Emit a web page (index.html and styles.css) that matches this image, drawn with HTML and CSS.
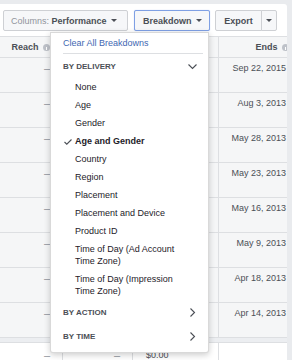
FILE: index.html
```html
<!DOCTYPE HTML>
<html>
    <head>
        <meta http-equiv="Content-Type" content="text/html;charset=UTF-8">
        <title>Ads Manager - Breakdown</title>
        <link rel="stylesheet" href="styles.css">
    </head>
<body>
<div class="card">
    <div class="toolbar">
        <button class="btn cols"><span class="muted">Columns:</span>&nbsp;Performance <i class="caret"></i></button>
        <div class="breakdown">
            <button class="btn focus">Breakdown <i class="caret"></i></button>
            <div class="menu">
                <a class="clear">Clear All Breakdowns</a>
                <div class="sep"></div>
                <div class="section">BY DELIVERY
                    <svg width="9" height="9" viewBox="0 0 9 9"><polyline points="0.5,2.5 4.5,6.5 8.5,2.5" fill="none" stroke="#4b4f56" stroke-width="1.1"/></svg>
                </div>
                <ul class="options">
                    <li>None</li>
                    <li>Age</li>
                    <li>Gender</li>
                    <li class="checked"><svg class="check" width="8" height="6" viewBox="0 0 8 6"><polyline points="0.5,3 2.8,5.2 7.5,0.5" fill="none" stroke="#4b4f56" stroke-width="1.1"/></svg>Age and Gender</li>
                    <li>Country</li>
                    <li>Region</li>
                    <li>Placement</li>
                    <li>Placement and Device</li>
                    <li>Product ID</li>
                    <li>Time of Day (Ad Account<br>Time Zone)</li>
                    <li>Time of Day (Impression<br>Time Zone)</li>
                </ul>
                <div class="section">BY ACTION
                    <svg width="9" height="9" viewBox="0 0 9 9"><polyline points="2.5,0.5 6.5,4.5 2.5,8.5" fill="none" stroke="#4b4f56" stroke-width="1.1"/></svg>
                </div>
                <div class="section">BY TIME
                    <svg width="9" height="9" viewBox="0 0 9 9"><polyline points="2.5,0.5 6.5,4.5 2.5,8.5" fill="none" stroke="#4b4f56" stroke-width="1.1"/></svg>
                </div>
            </div>
        </div>
        <div class="split">
            <button class="btn export">Export</button><button class="btn arrow"><i class="caret"></i></button>
        </div>
    </div>
    <div class="row head">
        <div class="num">Reach <i class="info"></i></div>
        <div></div>
        <div></div>
        <div class="date">Ends <i class="info"></i></div>
    </div>
    <div class="row"><div class="num"><span class="dash">&ndash;</span></div><div></div><div></div><div class="date">Sep 22, 2015</div></div>
    <div class="row"><div class="num"><span class="dash">&ndash;</span></div><div></div><div></div><div class="date">Aug 3, 2013</div></div>
    <div class="row"><div class="num"><span class="dash">&ndash;</span></div><div></div><div></div><div class="date">May 28, 2013</div></div>
    <div class="row"><div class="num"><span class="dash">&ndash;</span></div><div></div><div></div><div class="date">May 23, 2013</div></div>
    <div class="row"><div class="num"><span class="dash">&ndash;</span></div><div></div><div></div><div class="date">May 16, 2013</div></div>
    <div class="row"><div class="num"><span class="dash">&ndash;</span></div><div></div><div></div><div class="date">May 9, 2013</div></div>
    <div class="row"><div class="num"><span class="dash">&ndash;</span></div><div></div><div></div><div class="date">Apr 18, 2013</div></div>
    <div class="row"><div class="num"><span class="dash">&ndash;</span></div><div></div><div></div><div class="date">Apr 14, 2013</div></div>
    <div class="band"></div>
    <div class="row total"><div class="num"><span class="dash">&ndash;</span></div><div class="num"><span class="dash">&ndash;</span></div><div class="spend">$0.00</div><div></div></div>
</div>
</body>
</html>
```

FILE: styles.css
```css
* {
    box-sizing: border-box;
}
body {
    margin: 0;
    height: 360px;
    overflow: hidden;
    background: #e9ebee;
    font: 9px "Liberation Sans", Arial, sans-serif;
    color: #1d2129;
}
.card {
    width: 287px;
    margin-top: 4px;
    height: 400px;
    background: #fff;
    border-top-right-radius: 3px;
}
.toolbar {
    display: flex;
    padding: 6px 0 5px 3px;
}
.btn {
    height: 21px;
    display: flex;
    align-items: center;
    border: 1px solid #ced0d4;
    border-radius: 2px;
    background: #f6f7f9;
    color: #4b4f56;
    font: bold 9px "Liberation Sans", Arial, sans-serif;
    padding: 0 7px;
    margin: 0;
}
.cols {
    width: 125px;
}
.muted {
    font-weight: normal;
    color: #90949c;
}
.caret {
    display: inline-block;
    width: 0;
    height: 0;
    margin-left: 4px;
    border-left: 3px solid transparent;
    border-right: 3px solid transparent;
    border-top: 3px solid #4b4f56;
}
.breakdown {
    position: relative;
    margin-left: 6px;
}
.focus {
    width: 76px;
    padding-left: 8px;
    border-color: #7fa0e4;
    box-shadow: 0 0 1px #a9c0ee;
}
.split {
    display: flex;
    margin-left: 5px;
}
.export {
    width: 47px;
    justify-content: center;
    border-radius: 2px 0 0 2px;
}
.arrow {
    width: 16px;
    margin-left: -1px;
    padding: 0;
    justify-content: center;
    border-radius: 0 2px 2px 0;
}
.arrow .caret {
    margin-left: 0;
}
.menu {
    position: absolute;
    top: 22px;
    right: 1px;
    width: 159px;
    z-index: 2;
    background: #fff;
    border: 1px solid rgba(0, 0, 0, .15);
    border-radius: 0 0 3px 3px;
    box-shadow: 0 2px 6px rgba(0, 0, 0, .2);
    padding-bottom: 4px;
}
.clear {
    display: block;
    height: 20px;
    line-height: 20px;
    padding-left: 12px;
    color: #4267b2;
}
.sep {
    height: 1px;
    margin: 0 5px 0 12px;
    background: #dddfe2;
}
.section {
    height: 24px;
    display: flex;
    align-items: center;
    justify-content: space-between;
    padding: 0 11px 0 12px;
    font-size: 8px;
    font-weight: bold;
    color: #4b4f56;
}
.options {
    list-style: none;
    margin: 0;
    padding: 0;
}
.options li {
    position: relative;
    padding: 3px 0 3px 24px;
    line-height: 12px;
}
.options .checked {
    font-weight: bold;
}
.check {
    position: absolute;
    left: 13px;
    top: 7px;
}
.row {
    display: grid;
    grid-template-columns: 63px 70px 86px 68px;
    height: 35px;
    border-bottom: 1px solid #dddfe2;
    background: #f5f6f7;
    color: #4b4f56;
}
.row > div {
    border-right: 1px solid #dddfe2;
    padding-top: 4px;
    line-height: 12px;
    white-space: nowrap;
    overflow: hidden;
}
.row > div:last-child {
    border-right: 0;
}
.head {
    height: 22px;
    border-top: 1px solid #dddfe2;
    font-weight: bold;
}
.head > div {
    padding-top: 4px;
}
.num {
    text-align: right;
    padding-right: 12px;
}
.date {
    text-align: right;
    padding-right: 1px;
}
.head .date {
    padding-right: 0;
}
.info {
    position: relative;
    display: inline-block;
    width: 7px;
    height: 7px;
    margin-left: 2px;
    border-radius: 50%;
    background: #bec2c9;
    vertical-align: -1px;
}
.info::after {
    content: "";
    position: absolute;
    left: 3px;
    top: 3px;
    width: 1px;
    height: 3px;
    background: #fff;
}
.head .date .info {
    margin-right: -2px;
}
.dash {
    font-size: 11px;
    color: #90949c;
}
.band {
    height: 5px;
    background: #eceef1;
    border-bottom: 1px solid #dddfe2;
}
.total {
    background: #fff;
    border-bottom: 0;
}
.total > div {
    padding-top: 6px;
}
.spend {
    padding-left: 13px;
}
```
